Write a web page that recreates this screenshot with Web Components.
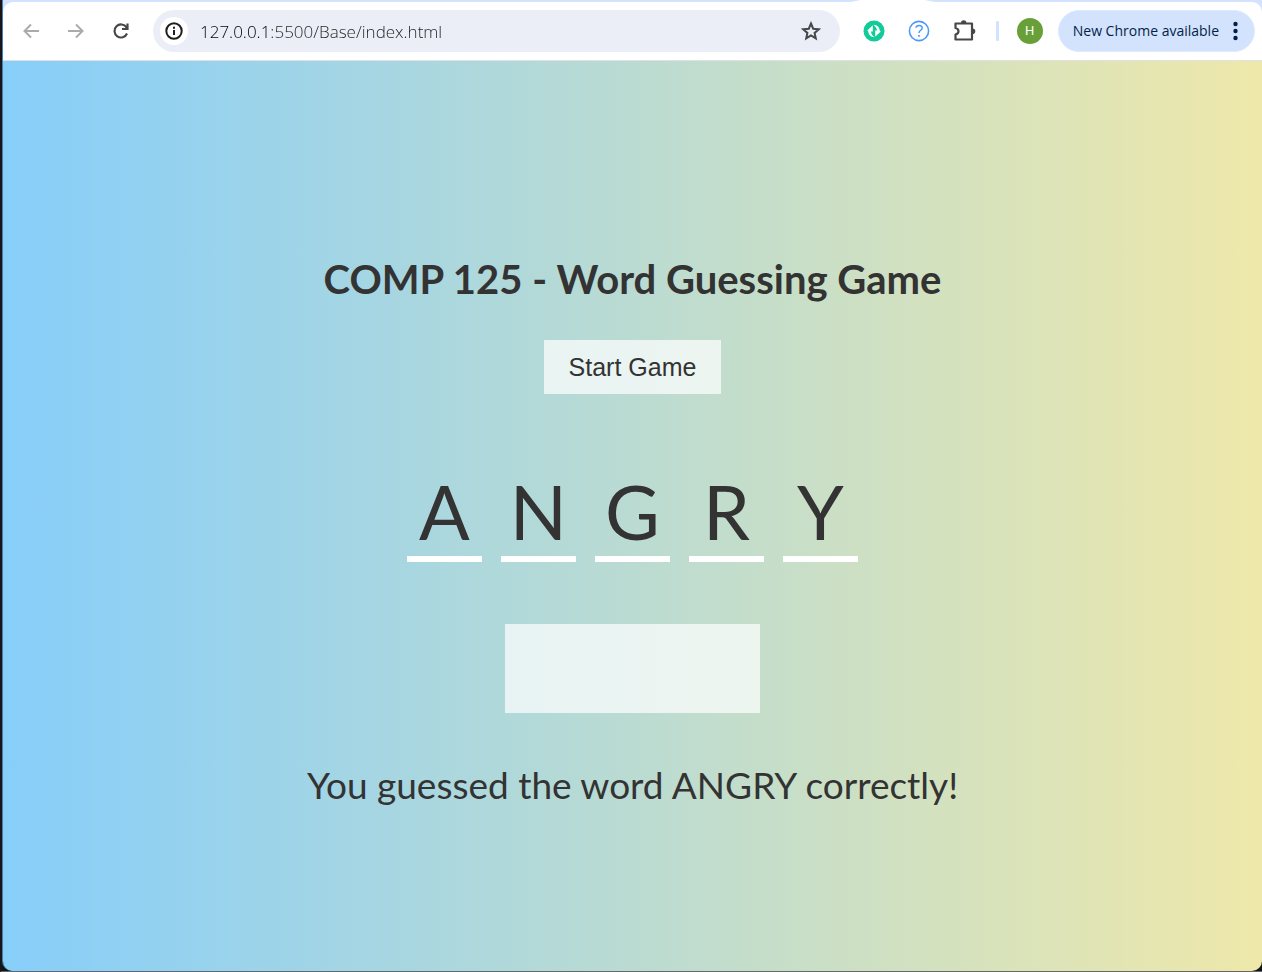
<!DOCTYPE html>
<html lang="en">
<head>
<meta charset="utf-8">
<title>Word Guessing Game</title>
<style>
html, body { margin: 0; height: 100%; }
body { overflow: hidden; }
</style>
</head>
<body>
<browser-window>
  <browser-toolbar slot="toolbar" url="127.0.0.1:5500/Base/index.html"></browser-toolbar>
  <word-game word="ANGRY">
    <span slot="title">COMP 125 - Word Guessing Game</span>
    <span slot="message">You guessed the word ANGRY correctly!</span>
  </word-game>
</browser-window>
<script>
class BrowserWindow extends HTMLElement {
  constructor() {
    super();
    this.attachShadow({ mode: 'open' }).innerHTML = `
    <style>
      :host { display: flex; flex-direction: column; box-sizing: border-box; height: 100%; min-height: 100vh;
        border-left: 2px solid #15171c; border-bottom: 1px solid #65676b; background: #101418; }
      .frame { flex: 1; display: flex; flex-direction: column; border-left: 1px solid #4b7ea6;
        border-radius: 0 0 10px 10px; overflow: hidden; }
      .strip { height: 2px; flex: none; background: #d3e3fd; display: flex; justify-content: flex-end; padding-right: 26%; }
      .tab { width: 84px; background: #fff; clip-path: polygon(10px 0, 74px 0, 100% 100%, 0 100%); }
      .bar { background: #d3e3fd; flex: none; }
      ::slotted(word-game) { flex: 1; }
    </style>
    <div class="frame">
      <div class="strip"><div class="tab"></div></div>
      <div class="bar"><slot name="toolbar"></slot></div>
      <slot></slot>
    </div>`;
  }
}
customElements.define('browser-window', BrowserWindow);

class ToolButton extends HTMLElement {
  constructor() {
    super();
    this.attachShadow({ mode: 'open' }).innerHTML = `
    <style>
      :host { display: block; flex: none; }
      button { display: flex; align-items: center; justify-content: center; width: 28px; height: 28px;
        padding: 0; border: 0; border-radius: 50%; background: none; color: inherit; }
      :host([filled]) button { background: #fff; }
    </style>
    <button type="button" aria-label="${this.getAttribute('label')}"><slot></slot></button>`;
  }
}
customElements.define('tool-button', ToolButton);

class BrowserToolbar extends HTMLElement {
  constructor() {
    super();
    this.attachShadow({ mode: 'open' }).innerHTML = `
    <style>
      :host { display: flex; align-items: center; box-sizing: border-box; height: 59px; padding: 0 7px 0 14px;
        background: #fff; border-bottom: 1px solid #dfe1e5; border-radius: 10px 10px 0 0;
        font-family: "Open Sans", "Noto Sans", sans-serif; color: #474747; }
      svg { display: block; }
      .nav { display: flex; gap: 17px; }
      .off { color: #ababab; }
      .omnibox { flex: 1; min-width: 0; display: flex; align-items: center; box-sizing: border-box; height: 42px;
        margin-left: 18px; padding: 0 15px 0 7px; border-radius: 21px; background: #ebeef7; }
      .omnibox tool-button:first-child { color: #1f1f1f; }
      input { flex: 1; min-width: 0; height: 30px; margin: 0 8px 0 12px; padding: 0; border: 0; outline: 0;
        font: 300 17px/24px "Open Sans", "Noto Sans", sans-serif; -webkit-text-fill-color: transparent;
        background: linear-gradient(90deg, #000 70px, #222 70px); -webkit-background-clip: text; background-clip: text; }
      .tools { display: flex; align-items: center; gap: 17px; margin-left: 20px; }
      .rule { width: 3px; height: 20px; margin: 0 1px; background: #d3e3fd; border-radius: 1px; }
      .avatar { width: 26px; height: 26px; padding: 0; border: 0; border-radius: 50%; background: #689f38; color: #fff;
        font: 13px/26px Roboto, sans-serif; }
      .update { display: flex; align-items: center; gap: 14px; box-sizing: border-box; height: 42px; padding: 0 16px 0 14px;
        margin-left: 15px; border: 1px solid #dfeaff; border-radius: 21px; background: #d3e3fd; color: #041e49;
        font: 14px/20px "Open Sans", "Noto Sans", sans-serif; white-space: nowrap; }
    </style>
    <div class="nav">
      <tool-button class="off" label="Back"><svg width="20" height="20" viewBox="0 0 20 20" fill="none" stroke="currentColor" stroke-width="2"><path d="M18 10H3.500M10 3.500L3.500 10l6.500 6.500"/></svg></tool-button>
      <tool-button class="off" label="Forward"><svg width="20" height="20" viewBox="0 0 20 20" fill="none" stroke="currentColor" stroke-width="2"><path d="M2 10h14.500M10 3.500l6.500 6.500-6.500 6.500"/></svg></tool-button>
      <tool-button label="Reload"><svg width="20" height="20" viewBox="0 0 20 20" fill="none" stroke="currentColor" stroke-width="2.200"><path d="M16 12.500A6.500 6.500 0 1 1 15.500 6.500L16.500 7.500M16.500 2.500v5.500h-5.500"/></svg></tool-button>
    </div>
    <div class="omnibox">
      <tool-button filled label="Site information"><svg width="18" height="18" viewBox="0 0 18 18" fill="none" stroke="currentColor" stroke-width="2"><circle cx="9" cy="9" r="7.700"/><path d="M9 8v5M9 4.800v2"/></svg></tool-button>
      <input type="text" aria-label="Address" spellcheck="false" value="${this.getAttribute('url')}">
      <tool-button label="Bookmark"><svg width="22" height="22" viewBox="0 0 22 22" fill="none" stroke="currentColor" stroke-width="2"><path d="M11 3.500l2.200 5.200 5.600.5-4.200 3.700 1.200 5.500-4.800-2.900-4.800 2.900 1.200-5.500-4.200-3.700 5.600-.5z"/></svg></tool-button>
    </div>
    <div class="tools">
      <tool-button label="Grammar extension"><svg width="22" height="22" viewBox="0 0 22 22"><circle cx="11" cy="11" r="10.500" fill="#11cb98"/><path d="M4 10.800L9.800 5.200v6.200H8c.2 2.600 1.500 3.800 3.500 5.900C7.500 17 5.200 14.500 5.200 10.800zM18 11.200l-5.800 5.600v-6.200H14c-.2-2.600-1.500-3.800-3.500-5.900 4 .3 6.300 2.800 6.300 6.500z" fill="#fff"/></svg></tool-button>
      <tool-button label="Help extension"><svg width="22" height="22" viewBox="0 0 22 22" fill="none" stroke="#4d98fb"><circle cx="11" cy="11" r="9.600" stroke-width="1.600"/><path d="M8 7.800c.2-3 6.200-3.200 6.200.1 0 2.400-3.200 2.300-3.200 5.100" stroke-width="1.500"/><path d="M11 15v1.800" stroke-width="1.700"/></svg></tool-button>
      <tool-button label="Extensions"><svg width="24" height="24" viewBox="0 0 24 24"><path d="M3.500 4.500h16.500v16H3.500v-5c4-1 4-5.500 0-6.500z" fill="none" stroke="#474747" stroke-width="2.200" stroke-linejoin="round"/><path d="M9 4a2.700 2.700 0 0 1 5.400 0zM20.500 9.500a2.800 2.800 0 0 1 0 5.600z" fill="#474747"/></svg></tool-button>
      <div class="rule"></div>
      <button class="avatar" type="button" aria-label="Profile H">H</button>
    </div>
    <button class="update" type="button"><span>New Chrome available</span><svg width="5" height="20" viewBox="0 0 5 20" fill="#041e49"><circle cx="2.500" cy="3" r="2.200"/><circle cx="2.500" cy="10" r="2.200"/><circle cx="2.500" cy="17" r="2.200"/></svg></button>`;
  }
}
customElements.define('browser-toolbar', BrowserToolbar);

class LetterBlanks extends HTMLElement {
  constructor() {
    super();
    const letters = [...this.getAttribute('word')].map(c => `<span>${c}</span>`).join('');
    this.attachShadow({ mode: 'open' }).innerHTML = `
    <style>
      :host { display: flex; justify-content: center; gap: 19px; font: 75px/90px Lato, sans-serif; }
      span { width: 75px; text-align: center; border-bottom: 6px solid #fff; }
    </style>${letters}`;
  }
}
customElements.define('letter-blanks', LetterBlanks);

class WordGame extends HTMLElement {
  constructor() {
    super();
    this.attachShadow({ mode: 'open' }).innerHTML = `
    <style>
      :host { display: flex; flex-direction: column; align-items: center; justify-content: center;
        box-sizing: border-box; padding-top: 32px;
        background: linear-gradient(to right, #87cefa, #eee8aa);
        color: #333; font-family: Lato, "Open Sans", sans-serif; }
      h1 { margin: 0 0 38px; font-size: 40px; line-height: 46px; text-align: center; }
      button { height: 54px; padding: 0 25px; border: 0; background: rgba(255,255,255,.7); color: #333;
        font: 25px/30px "Liberation Sans", Arial, sans-serif; }
      letter-blanks { margin-top: 72px; }
      .card { width: 255px; height: 89px; margin-top: 62px; background: rgba(255,255,255,.7); }
      p { margin: 48px 0 0; font-size: 37px; line-height: 48px; text-align: center; }
    </style>
    <h1><slot name="title"></slot></h1>
    <button type="button">Start Game</button>
    <letter-blanks word="${this.getAttribute('word')}"></letter-blanks>
    <div class="card"></div>
    <p><slot name="message"></slot></p>`;
  }
}
customElements.define('word-game', WordGame);
</script>
</body>
</html>
